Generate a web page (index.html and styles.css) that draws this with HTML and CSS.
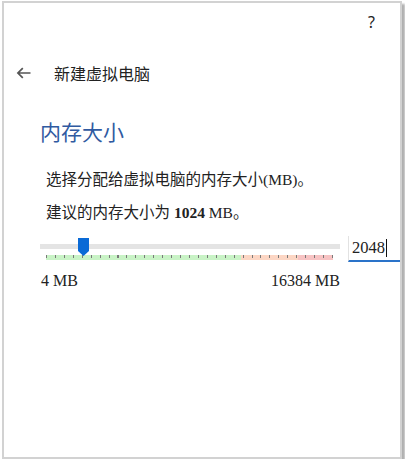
FILE: index.html
```html
<!DOCTYPE html>
<html lang="zh-CN">
<head>
<meta charset="utf-8">
<title>新建虚拟电脑</title>
<link rel="stylesheet" href="styles.css">
</head>
<body>
<div class="window">
  <div class="topbar"><span class="help">?</span></div>
  <div class="header">
    <svg class="back" width="15" height="12" viewBox="0 0 15 12" aria-hidden="true">
      <path d="M14.5 6H2M6.8 1.1L1.9 6l4.9 4.9" fill="none" stroke="#555" stroke-width="1.7"/>
    </svg>
    <span class="title">新建虚拟电脑</span>
  </div>
  <div class="content">
    <h1 class="heading">内存大小</h1>
    <p class="text p1">选择分配给虚拟电脑的内存大小(MB)。</p>
    <p class="text p2">建议的内存大小为 <b>1024</b> MB。</p>
    <div class="slider-row">
      <div class="slider">
        <div class="track"></div>
        <div class="band"><div class="ticks"></div></div>
        <div class="thumb"></div>
      </div>
      <div class="input"><span class="value">2048</span></div>
    </div>
    <div class="labels"><span>4 MB</span><span>16384 MB</span></div>
  </div>
</div>
</body>
</html>
```
FILE: styles.css
```css
html, body {
  margin: 0;
  padding: 0;
  background: #fff;
}
body {
  font-family: "Liberation Serif", "Noto Sans CJK SC", serif;
  color: #222;
}
.window {
  margin: 1px 0 0 2px;
  width: 396px;
  height: 454px;
  border: 2px solid #d2d2d2;
  box-shadow: 3px 3px 2px #b0b0b0;
  background: #fff;
  overflow: hidden;
}
.topbar {
  height: 38px;
  display: flex;
  align-items: center;
  justify-content: flex-end;
  padding-right: 25px;
}
.help {
  font-family: "Noto Sans", sans-serif;
  font-size: 16px;
  color: #222;
}
.header {
  height: 64px;
  display: flex;
  align-items: center;
  padding-left: 12px;
}
.back {
  display: block;
  margin-right: 23px;
}
.title {
  font-family: "Noto Sans CJK SC", sans-serif;
  font-size: 16px;
  color: #222;
}
.content {
  padding-left: 36px;
}
.heading {
  margin: 0;
  height: 52px;
  display: flex;
  align-items: center;
  font-family: "Noto Sans CJK SC", sans-serif;
  font-weight: normal;
  font-size: 21px;
  color: #2f5aa1;
}
.text {
  margin: 0;
  padding-left: 6px;
  font-size: 15.5px;
  line-height: 24px;
  color: #222;
}
.p1 { margin-top: 11px; }
.p2 { margin-top: 9px; }
.text b { font-weight: bold; }
.slider-row {
  margin-top: 13px;
  display: flex;
  align-items: flex-start;
}
.slider {
  position: relative;
  width: 300px;
  height: 24px;
}
.track {
  margin-top: 6px;
  height: 5px;
  background: #e4e4e4;
}
.band {
  margin: 6px 0 0 6px;
  width: 287px;
  height: 5px;
  background: linear-gradient(to right, #c9f3c6 0 68%, #fcd6c4 68% 87.7%, #f7c3c3 87.7% 100%);
}
.ticks {
  margin-top: 1px;
  height: 3px;
  background: repeating-linear-gradient(to right, #7a7a7a 0 1px, transparent 1px 8.9375px);
}
.thumb {
  position: absolute;
  left: 38px;
  top: 0;
  width: 11px;
  height: 18px;
  background: #0a6ad6;
  clip-path: polygon(0 0, 100% 0, 100% 72%, 50% 100%, 0 72%);
}
.input {
  margin-left: 8px;
  margin-top: -2px;
  flex: 1;
  height: 24px;
  border-left: 1px solid #e2e2e2;
  border-bottom: 2px solid #2a73c9;
  display: flex;
  align-items: center;
  padding-left: 3px;
}
.value {
  font-size: 16.5px;
  color: #222;
  border-right: 1px solid #111;
  line-height: 18px;
  padding-right: 1px;
}
.labels {
  width: 299px;
  margin-top: 9px;
  display: flex;
  justify-content: space-between;
  font-size: 16px;
  line-height: 20px;
  color: #222;
  padding-left: 1px;
}
```
